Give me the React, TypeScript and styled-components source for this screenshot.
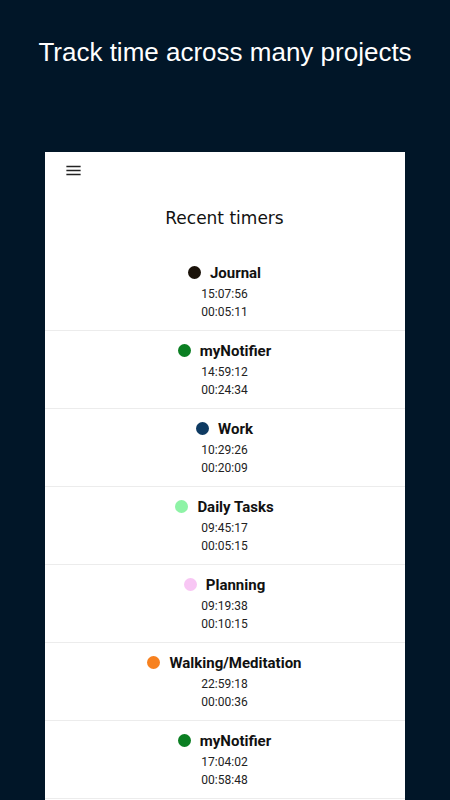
import React from 'react';
import styled, { createGlobalStyle } from 'styled-components';

type Timer = {
  name: string;
  color: string;
  start: string;
  duration: string;
};

const timers: Timer[] = [
  { name: 'Journal', color: '#1a1209', start: '15:07:56', duration: '00:05:11' },
  { name: 'myNotifier', color: '#0b7f22', start: '14:59:12', duration: '00:24:34' },
  { name: 'Work', color: '#0e3a62', start: '10:29:26', duration: '00:20:09' },
  { name: 'Daily Tasks', color: '#8ef3a6', start: '09:45:17', duration: '00:05:15' },
  { name: 'Planning', color: '#f8c6f4', start: '09:19:38', duration: '00:10:15' },
  { name: 'Walking/Meditation', color: '#f7811f', start: '22:59:18', duration: '00:00:36' },
  { name: 'myNotifier', color: '#0b7f22', start: '17:04:02', duration: '00:58:48' },
];

function App() {
  return (
    <>
      <GlobalStyle />
      <Page>
        <Headline>Track time across many projects</Headline>
        <Card>
          <Toolbar>
            <MenuIcon width="19" height="19" viewBox="0 0 24 24">
              <path d="M3 18h18v-2H3v2zm0-5h18v-2H3v2zm0-7v2h18V6H3z" fill="#222" />
            </MenuIcon>
          </Toolbar>
          <CardTitle>Recent timers</CardTitle>
          <TimerList>
            {timers.map((t, i) => (
              <TimerRow key={i}>
                <NameLine>
                  <Dot color={t.color} />
                  <Name>{t.name}</Name>
                </NameLine>
                <TimeLine>{t.start}</TimeLine>
                <TimeLine>{t.duration}</TimeLine>
              </TimerRow>
            ))}
          </TimerList>
        </Card>
      </Page>
    </>
  );
}

const GlobalStyle = createGlobalStyle`
  html, body {
    margin: 0;
    padding: 0;
    background: #011628;
  }
`;

const Page = styled.div`
  height: 800px;
  overflow: hidden;
  background: #011628;
  display: flex;
  flex-direction: column;
  align-items: center;
`;

const Headline = styled.h1`
  margin: 0;
  padding-top: 36px;
  font-family: 'Liberation Sans', Arial, sans-serif;
  font-weight: 400;
  font-size: 26px;
  line-height: 32px;
  color: #ffffff;
  text-align: center;
`;

const Card = styled.div`
  margin-top: 84px;
  width: 360px;
  margin-left: -1px;
  background: #ffffff;
  flex: 1;
  display: flex;
  flex-direction: column;
`;

const Toolbar = styled.div`
  height: 36px;
  padding-left: 19px;
  display: flex;
  align-items: center;
`;

const MenuIcon = styled.svg`
  display: block;
`;

const CardTitle = styled.h2`
  margin: 0;
  padding-top: 20px;
  padding-bottom: 25px;
  font-family: 'DejaVu Sans', Verdana, sans-serif;
  font-weight: 400;
  font-size: 17px;
  line-height: 20px;
  color: #111;
  text-align: center;
`;

const TimerList = styled.div`
  display: flex;
  flex-direction: column;
`;

const TimerRow = styled.div`
  padding: 10px 0 9px;
  border-bottom: 1px solid #ececec;
  display: flex;
  flex-direction: column;
  align-items: center;
  font-family: Roboto, 'Liberation Sans', sans-serif;
`;

const NameLine = styled.div`
  height: 20px;
  margin-bottom: 2px;
  display: flex;
  align-items: center;
  gap: 9px;
`;

const Dot = styled.span<{ color: string }>`
  width: 13px;
  height: 13px;
  border-radius: 50%;
  background: ${(p) => p.color};
  margin-top: -1px;
`;

const Name = styled.span`
  font-size: 15px;
  font-weight: 700;
  line-height: 20px;
  color: #111;
`;

const TimeLine = styled.div`
  font-size: 12px;
  line-height: 18px;
  color: #222;
`;

export default App;
